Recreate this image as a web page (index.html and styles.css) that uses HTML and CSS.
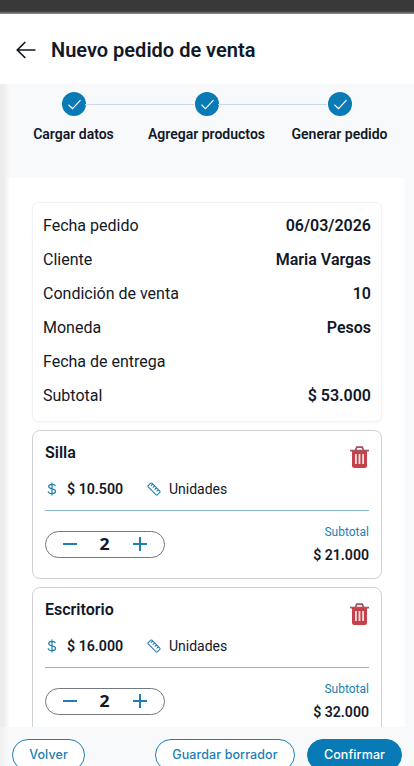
FILE: index.html
```html
<!DOCTYPE html>
<html lang="es">
<head>
<meta charset="utf-8">
<title>Nuevo pedido de venta</title>
<link rel="stylesheet" href="styles.css">
</head>
<body>
<svg class="defs" width="0" height="0">
  <symbol id="check" viewBox="0 0 24 24"><path d="M6.500 12.800l4 3.800 8-8.400" fill="none" stroke="#fff" stroke-width="1.200"/></symbol>
  <symbol id="dollar" viewBox="0 0 10 14"><path d="M8.300 4.200C8 2.800 6.800 2.300 5 2.300S1.700 3 1.700 4.500C1.700 7.600 8.600 6 8.600 9.300c0 1.600-1.500 2.300-3.500 2.300S1.400 11 1.200 9.200M5 .5v13" fill="none" stroke="#207fb2" stroke-width="1.200"/></symbol>
  <symbol id="ruler" viewBox="0 0 14 14"><path d="M1.200 3.700 3.700 1.200Q4.300.7 4.900 1.200L12.800 9.100Q13.300 9.700 12.800 10.300L10.300 12.800Q9.700 13.300 9.100 12.800L1.200 4.900Q.7 4.300 1.200 3.700ZM5.600 2 3.900 3.800M7.500 3.900 5.800 5.600M9.400 5.800 7.700 7.500M11.300 7.700 9.600 9.400" fill="none" stroke="#207fb2" stroke-width="1.100"/></symbol>
  <symbol id="trash" viewBox="0 0 19 22"><path d="M5.500 4.200 6.800 1.200h5.400l1.300 3" fill="none" stroke="#a94f58" stroke-width="1.700"/><path d="M0 3.700h19v1.800H0z" fill="#a05a61"/><path d="M2 5h15v14.500Q17 22 14.500 22h-10Q2 22 2 19.500Z" fill="#c5424c"/><path d="M5.900 8v10M9.500 8v10M13.100 8v10" stroke="#f5e7e8" stroke-width="1.700"/></symbol>
</svg>
<div class="app">
  <div class="topbar"></div>
  <header class="header">
    <svg class="back" viewBox="0 0 20 18"><path d="M19.500 9H1.500M9.300 1 1.300 9l8 8" fill="none" stroke="#111827" stroke-width="1.700"/></svg>
    <h1>Nuevo pedido de venta</h1>
  </header>
  <section class="stepper">
    <div class="step"><svg class="dot"><use href="#check"/></svg><span>Cargar datos</span></div>
    <div class="step"><svg class="dot"><use href="#check"/></svg><span>Agregar productos</span></div>
    <div class="step"><svg class="dot"><use href="#check"/></svg><span>Generar pedido</span></div>
  </section>
  <main class="main">
    <section class="summary">
      <div class="row"><span>Fecha pedido</span><b>06/03/2026</b></div>
      <div class="row"><span>Cliente</span><b>Maria Vargas</b></div>
      <div class="row"><span>Condición de venta</span><b>10</b></div>
      <div class="row"><span>Moneda</span><b>Pesos</b></div>
      <div class="row"><span>Fecha de entrega</span></div>
      <div class="row"><span>Subtotal</span><b>$ 53.000</b></div>
    </section>
    <article class="card">
      <div class="top"><h2>Silla</h2><svg class="trash"><use href="#trash"/></svg></div>
      <div class="info"><svg class="dollar"><use href="#dollar"/></svg><b>$ 10.500</b><svg class="ruler"><use href="#ruler"/></svg><span>Unidades</span></div>
      <div class="bottom">
        <div class="qty"><i class="minus"></i><b>2</b><i class="plus"></i></div>
        <div class="sub"><span>Subtotal</span><b>$ 21.000</b></div>
      </div>
    </article>
    <article class="card">
      <div class="top"><h2>Escritorio</h2><svg class="trash"><use href="#trash"/></svg></div>
      <div class="info"><svg class="dollar"><use href="#dollar"/></svg><b>$ 16.000</b><svg class="ruler"><use href="#ruler"/></svg><span>Unidades</span></div>
      <div class="bottom">
        <div class="qty"><i class="minus"></i><b>2</b><i class="plus"></i></div>
        <div class="sub"><span>Subtotal</span><b>$ 32.000</b></div>
      </div>
    </article>
  </main>
  <footer class="footer">
    <button class="volver">Volver</button>
    <button class="guardar">Guardar borrador</button>
    <button class="confirmar">Confirmar</button>
  </footer>
</div>
</body>
</html>
```
FILE: styles.css
```css
* { box-sizing: border-box; }
body { margin: 0; font-family: Roboto, sans-serif; color: #111827; }
b, h1, h2 { font-weight: 600; margin: 0; }
.defs { display: none; }
.app { width: 414px; height: 766px; overflow: hidden; display: flex; flex-direction: column; background: linear-gradient(90deg, #ececec 0, #eee 4px, #fff 10px, #fff 403px, #f8f9fb 406px); }
.topbar { height: 14px; flex: none; background: radial-gradient(ellipse at 259px 1px, #172040 2px, transparent 4px), radial-gradient(ellipse at 388px 0, #172040 3px, transparent 5px), radial-gradient(ellipse at 342px 0, #172040 1px, transparent 3px), linear-gradient(#393939 0 11px, #595756 12px, #969290 14px); }
.header { height: 70px; flex: none; background: #fff; display: flex; align-items: center; padding: 2px 16px 0; gap: 15px; }
.back { width: 20px; height: 18px; }
h1 { font-size: 20px; line-height: 24px; white-space: nowrap; }
.stepper { height: 94px; flex: none; padding: 8px 8px 0 7px; display: grid; grid-template-columns: repeat(3, 133px); background: linear-gradient(90deg, #ececec 0, #eee 4px, #f8f9fb 10px); }
.step { display: flex; flex-direction: column; align-items: center; position: relative; }
.step + .step::before { content: ""; position: absolute; top: 12px; right: 79px; width: 109px; height: 1px; background: #cad9e5; }
.dot { width: 24px; height: 24px; border-radius: 50%; background: #087bb7; }
.step span { font-size: 14px; font-weight: 600; line-height: 18px; margin-top: 9px; white-space: nowrap; }
.main { height: 549px; flex: none; overflow: hidden; padding: 24px 32px 0; }
.summary { height: 220px; border: 1px solid #f1f2f5; border-radius: 6px; padding: 5px 10px; box-shadow: 0 1px 3px #00000009; background: #fff; }
.row { height: 34px; display: flex; align-items: center; justify-content: space-between; font-size: 16px; }
.card { height: 149px; margin-top: 8px; border: 1px solid #cfd1d4; border-radius: 8px; padding: 10px 12px; background: #fff; }
.top { height: 34px; display: flex; justify-content: space-between; }
h2 { font-size: 16px; line-height: 24px; }
.trash { width: 19px; height: 22px; margin-top: 5px; }
.info { height: 36px; display: flex; align-items: center; font-size: 14px; padding: 0 0 8px 2px; border-bottom: 1px solid #86b5d6; }
.dollar { width: 10px; height: 14px; margin-right: 10px; }
.info b { width: 80px; font-size: 14.2px; }
.ruler { width: 14px; height: 14px; margin-right: 8px; }
.bottom { display: flex; justify-content: space-between; }
.qty { width: 120px; height: 27px; margin-top: 20px; border: 1px solid #747880; border-radius: 14px; display: flex; align-items: center; justify-content: space-between; padding: 0 17px 1px; }
.qty b { font: 700 16px "Noto Sans", sans-serif; transform: scaleX(1.1); }
.minus, .plus { width: 14px; height: 14px; background: linear-gradient(#207fb2, #207fb2) center / 14px 2px no-repeat; }
.plus { background: linear-gradient(#207fb2, #207fb2) center / 14px 2px no-repeat, linear-gradient(#207fb2, #207fb2) center / 2px 14px no-repeat; }
.sub { display: flex; flex-direction: column; text-align: right; padding-top: 10px; }
.sub span { font-size: 12px; line-height: 22px; color: #207fb2; }
.sub b { font-size: 14.1px; line-height: 24px; }
.footer { height: 39px; flex: none; padding: 12px 12px 0; display: flex; background: linear-gradient(90deg, #f0f0f1 0, #f8f9fb 10px); }
button { height: 32px; flex: none; padding: 0 0 2px; border: 1px solid #207fb2; border-radius: 16px; background: #fff; color: #207fb2; font: 500 12.5px Inter, sans-serif; letter-spacing: .1px; white-space: nowrap; }
.volver { width: 73px; }
.guardar { width: 140px; margin-left: 70px; }
.confirmar { width: 95px; margin-left: 12px; background: #087bb7; border-color: #087bb7; color: #fff; }
```
